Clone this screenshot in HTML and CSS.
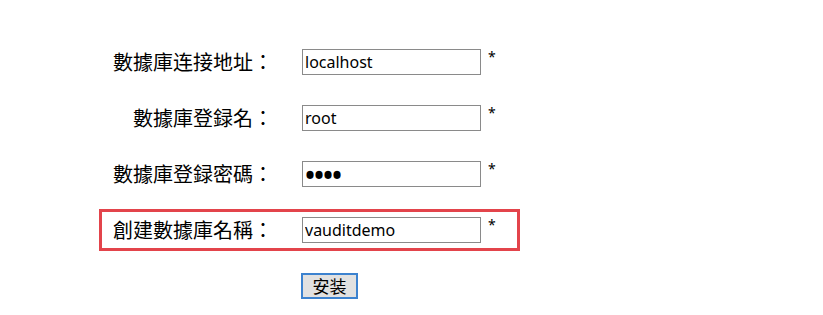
FILE: index.html
```html
<!DOCTYPE html>
<html lang="zh-Hant">
  <head>
    <meta charset="UTF-8" />
    <title>安装</title>
    <link rel="stylesheet" href="styles.css">
  </head>
  <body>
    <form class="install">
      <div class="row">
        <label for="host">數據庫连接地址：</label>
        <input type="text" id="host" value="localhost" />
        <span class="req">*</span>
      </div>
      <div class="row">
        <label for="user">數據庫登録名：</label>
        <input type="text" id="user" value="root" />
        <span class="req">*</span>
      </div>
      <div class="row">
        <label for="pass">數據庫登録密碼：</label>
        <input type="password" id="pass" value="root" />
        <span class="req">*</span>
      </div>
      <div class="row row-marked">
        <label for="dbname">創建數據庫名稱：</label>
        <input type="text" id="dbname" value="vauditdemo" />
        <span class="req">*</span>
      </div>
      <div class="row">
        <span class="label-empty"></span>
        <button type="button" class="btn">安装</button>
      </div>
    </form>
  </body>
</html>
```

FILE: styles.css
```css
body {
  margin: 0;
  background: #fff;
  color: #000;
  font-family: "Noto Sans", "Noto Sans CJK TC", sans-serif;
}

.install {
  padding-top: 41px;
  margin-left: 99px;
  width: 421px;
}

.row {
  display: flex;
  align-items: center;
  height: 42px;
  margin-bottom: 14px;
  border: 3px solid transparent;
  box-sizing: border-box;
}

.row-marked {
  border-color: #e3444b;
}

.row label,
.label-empty {
  width: 171px;
  text-align: right;
  font-family: "Noto Sans CJK TC", sans-serif;
  font-size: 20px;
  line-height: 24px;
}

.row input {
  margin-left: 29px;
  width: 179px;
  height: 26px;
  box-sizing: border-box;
  padding: 0 2px;
  border: 1px solid #8a8a8a;
  font-family: "Noto Sans", sans-serif;
  font-size: 16px;
  color: #000;
  outline: none;
}

.row input[type="password"] {
  padding-left: 1px;
  font-size: 32px;
  line-height: 24px;
  letter-spacing: -3px;
}

.req {
  align-self: flex-start;
  margin-top: 3px;
  margin-left: 7px;
  font-size: 14px;
}

.btn {
  margin-left: 28px;
  width: 57px;
  height: 26px;
  padding: 0;
  background: #e1e1e1;
  border: 2px solid #3c82cf;
  font-family: "Noto Sans CJK TC", sans-serif;
  font-size: 17px;
  line-height: 20px;
  color: #000;
}
```
